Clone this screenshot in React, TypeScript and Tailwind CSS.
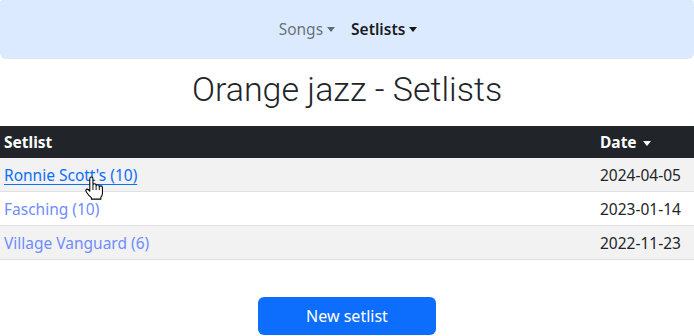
import React from "react";

function Caret({ className }: { className?: string }) {
  return (
    <span
      className={
        "ml-[4px] inline-block h-0 w-0 border-x-[4.5px] border-t-[5px] border-x-transparent align-[3px] " +
        (className ?? "")
      }
    />
  );
}

function HandCursor() {
  return (
    <svg
      className="pointer-events-none absolute left-[84px] top-[176px]"
      width="20"
      height="25"
      viewBox="0 0 19 23"
    >
      <path
        d="M5.5,12 V2.2 Q5.5,0.6 7,0.6 Q8.5,0.6 8.5,2.2 V8.2 Q8.5,7 10,7 Q11.5,7 11.5,8.4 V9.2 Q11.5,8 13,8 Q14.5,8 14.5,9.4 V10.2 Q14.5,9 16,9 Q17.5,9 17.5,10.5 V16 Q17.5,18.2 16,19.6 V21.6 H7 V20.2 Q4.6,18.4 2.4,15 Q1.2,13 2.4,12.2 Q3.6,11.6 5.5,14 Z"
        fill="#fff"
        stroke="#000"
        strokeWidth="1"
        strokeLinejoin="round"
      />
      <path d="M8.5,8.5 V13 M11.5,9.5 V13 M14.5,10.5 V13" stroke="#000" strokeWidth="0.9" fill="none" />
    </svg>
  );
}

export default function App() {
  const rows = [
    { name: "Ronnie Scott's (10)", date: "2024-04-05", hover: true },
    { name: "Fasching (10)", date: "2023-01-14" },
    { name: "Village Vanguard (6)", date: "2022-11-23" },
  ];
  return (
    <div
      className="relative h-[336px] w-[694px] overflow-hidden bg-white text-[15.5px] text-[#212529]"
      style={{ fontFamily: '"Segoe UI", "Noto Sans", "Open Sans", sans-serif' }}
    >
      <nav className="flex h-[59px] items-center justify-center gap-[16px] rounded-b-[6px] rounded-t-[3px] bg-[#dbeafe] pl-[2px]">
        <span className="flex items-center text-[15.5px] text-[rgba(0,0,0,0.55)]">
          Songs
          <Caret className="border-t-[rgba(0,0,0,0.55)]" />
        </span>
        <span className="flex items-center text-[15.5px] font-semibold text-[rgba(0,0,0,0.9)]">
          Setlists
          <Caret className="border-t-[rgba(0,0,0,0.9)]" />
        </span>
      </nav>
      <h1
        className="mt-[9px] text-center text-[34px] font-light leading-[42px] text-[#212529]"
        style={{ fontFamily: "Roboto, sans-serif" }}
      >
        Orange jazz - Setlists
      </h1>
      <div className="mt-[16px] w-full">
        <div className="flex h-[32px] items-center bg-[#212529] pt-[2px] font-bold text-white">
          <div className="flex-1 px-[4px]">Setlist</div>
          <div className="flex w-[98px] items-center px-[4px]">
            Date
            <span className="ml-[6px] inline-block h-0 w-0 border-x-[4px] border-t-[5px] border-x-transparent border-t-white" />
          </div>
        </div>
        {rows.map((r, i) => (
          <div
            key={r.name}
            className={
              "flex h-[34px] items-center border-b border-[#dee2e6] pt-[3px] " +
              (i % 2 === 0 ? "bg-[#f2f2f2]" : "bg-white")
            }
          >
            <div className="flex-1 px-[4px]">
              <a
                className={
                  r.hover
                    ? "text-[#0d6efd] underline decoration-1 underline-offset-[3px]"
                    : "text-[#6f8cff]"
                }
              >
                {r.name}
              </a>
            </div>
            <div className="w-[98px] px-[4px]">{r.date}</div>
          </div>
        ))}
      </div>
      <div className="mt-[37px] flex justify-center">
        <button className="h-[38px] w-[178px] rounded-[6px] bg-[#0d6efd] text-[16px] text-white">
          New setlist
        </button>
      </div>
      <HandCursor />
    </div>
  );
}
